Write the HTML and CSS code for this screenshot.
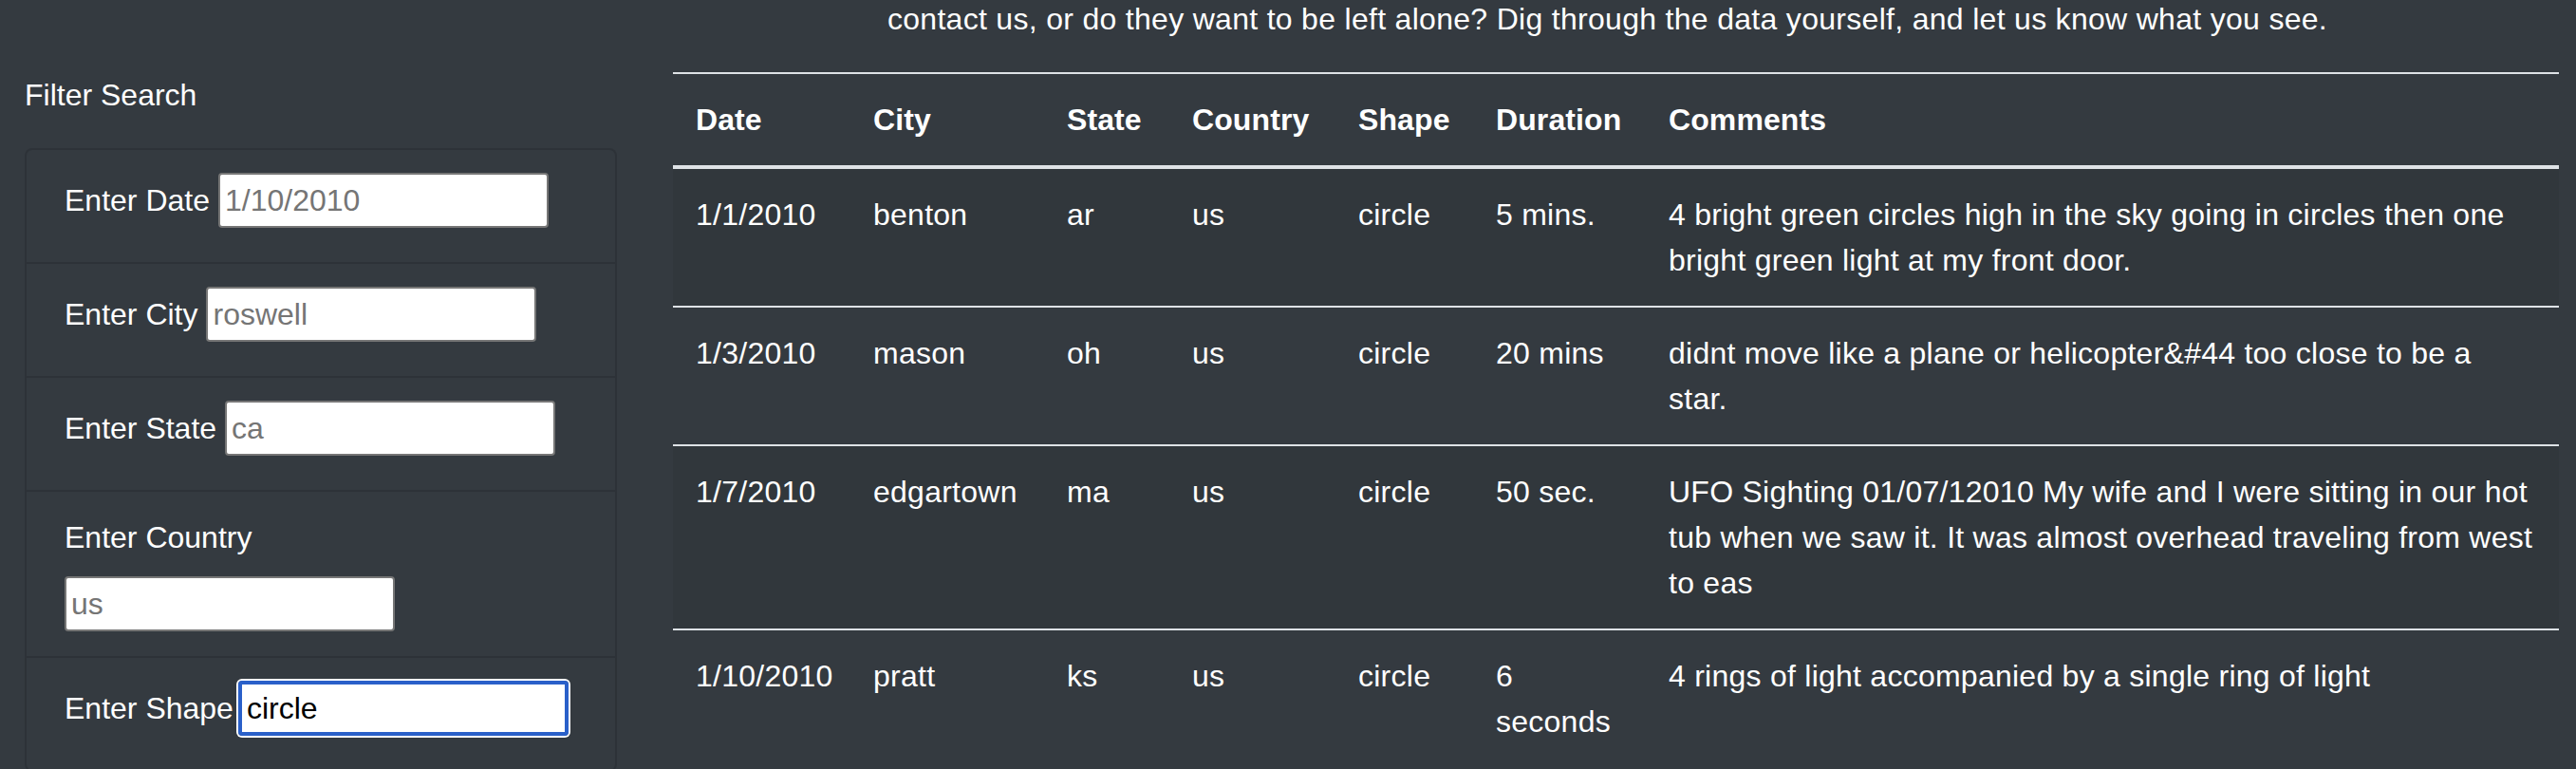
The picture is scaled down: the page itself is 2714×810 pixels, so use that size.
FILE: index.html
```html
<!DOCTYPE html>
<html lang="en">
<head>
<meta charset="utf-8">
<title>UFO Sightings</title>
<link rel="stylesheet" href="styles.css">
</head>
<body>
  <div class="layout">
    <p class="intro">contact us, or do they want to be left alone? Dig through the data yourself, and let us know what you see.</p>

    <form class="filters">
      <p class="filters-title">Filter Search</p>
      <ul class="filter-list">
        <li class="filter-item">
          <div class="field">
            <label for="datetime">Enter Date</label>
            <input type="text" id="datetime" placeholder="1/10/2010">
          </div>
        </li>
        <li class="filter-item">
          <div class="field">
            <label for="city">Enter City</label>
            <input type="text" id="city" placeholder="roswell">
          </div>
        </li>
        <li class="filter-item">
          <div class="field">
            <label for="state">Enter State</label>
            <input type="text" id="state" placeholder="ca">
          </div>
        </li>
        <li class="filter-item">
          <div class="field field-stacked">
            <label for="country">Enter Country</label>
            <input type="text" id="country" placeholder="us">
          </div>
        </li>
        <li class="filter-item">
          <div class="field field-tight">
            <label for="shape">Enter Shape</label>
            <input type="text" id="shape" class="is-focused" value="circle">
          </div>
        </li>
      </ul>
    </form>

    <table class="sightings">
      <colgroup>
        <col class="c-date">
        <col class="c-city">
        <col class="c-state">
        <col class="c-country">
        <col class="c-shape">
        <col class="c-duration">
        <col class="c-comments">
      </colgroup>
      <thead>
        <tr>
          <th>Date</th>
          <th>City</th>
          <th>State</th>
          <th>Country</th>
          <th>Shape</th>
          <th>Duration</th>
          <th>Comments</th>
        </tr>
      </thead>
      <tbody>
        <tr>
          <td>1/1/2010</td>
          <td>benton</td>
          <td>ar</td>
          <td>us</td>
          <td>circle</td>
          <td>5 mins.</td>
          <td>4 bright green circles high in the sky going in circles then one bright green light at my front door.</td>
        </tr>
        <tr>
          <td>1/3/2010</td>
          <td>mason</td>
          <td>oh</td>
          <td>us</td>
          <td>circle</td>
          <td>20 mins</td>
          <td>didnt move like a plane or helicopter&amp;#44 too close to be a star.</td>
        </tr>
        <tr>
          <td>1/7/2010</td>
          <td>edgartown</td>
          <td>ma</td>
          <td>us</td>
          <td>circle</td>
          <td>50 sec.</td>
          <td>UFO Sighting 01/07/12010 My wife and I were sitting in our hot tub when we saw it. It was almost overhead traveling from west to eas</td>
        </tr>
        <tr>
          <td>1/10/2010</td>
          <td>pratt</td>
          <td>ks</td>
          <td>us</td>
          <td>circle</td>
          <td>6 seconds</td>
          <td>4 rings of light accompanied by a single ring of light</td>
        </tr>
      </tbody>
    </table>
  </div>
</body>
</html>
```

FILE: styles.css
```css
html, body {
  margin: 0;
  padding: 0;
}

body {
  background: #343a40;
  color: #fff;
  font-family: "Liberation Sans", Arial, Helvetica, sans-serif;
  font-size: 32px;
  line-height: 48px;
  overflow: hidden;
}

.layout {
  display: grid;
  grid-template-columns: 624px 1987px;
  column-gap: 59px;
  align-items: start;
  padding-left: 26px;
}

.intro {
  grid-column: 2;
  grid-row: 1;
  margin: -4px 18px 32px 0;
  text-align: center;
  white-space: nowrap;
  letter-spacing: 0.3px;
}

.filters {
  grid-column: 1;
  grid-row: 2;
  margin: 0;
}

.filters-title {
  margin: 0 0 32px;
}

.filter-list {
  list-style: none;
  margin: 0;
  padding: 0;
}

.filter-item {
  background: #343a40;
  border: 2px solid rgba(0, 0, 0, 0.125);
  padding: 24px 40px;
}

.filter-item + .filter-item {
  border-top-width: 0;
}

.filter-item:first-child {
  border-top-left-radius: 8px;
  border-top-right-radius: 8px;
}

.filter-item:last-child {
  border-bottom-left-radius: 8px;
  border-bottom-right-radius: 8px;
}

.field {
  display: flex;
  align-items: baseline;
  gap: 9px;
  min-height: 70px;
}

.field-tight {
  gap: 5px;
}

.field label {
  line-height: 48px;
  color: #fff;
}

.field-stacked {
  flex-direction: column;
  align-items: flex-start;
  gap: 17px;
  min-height: 125px;
}

.field input {
  box-sizing: border-box;
  width: 348px;
  height: 58px;
  margin: 0;
  padding: 0 5px;
  font-family: "Liberation Sans", Arial, Helvetica, sans-serif;
  font-size: 32px;
  color: #000;
  background: #fff;
  border: 2px solid #767676;
  border-radius: 4px;
  outline: none;
}

.field input::placeholder {
  color: #757575;
  opacity: 1;
}

.field input.is-focused {
  padding-left: 7px;
  outline: 4px solid #2a60c9;
  outline-offset: -4px;
  box-shadow: 0 0 0 2px #fff;
}

.sightings {
  grid-column: 2;
  grid-row: 2;
  width: 1987px;
  table-layout: fixed;
  border-collapse: collapse;
  color: #fff;
}

.c-date { width: 187px; }
.c-city { width: 204px; }
.c-state { width: 132px; }
.c-country { width: 175px; }
.c-shape { width: 145px; }
.c-duration { width: 182px; }
.c-comments { width: 962px; }

.sightings th,
.sightings td {
  padding: 24px;
  text-align: left;
  vertical-align: top;
  border-top: 2px solid #dee2e6;
}

.sightings td {
  letter-spacing: 0.25px;
}

.sightings th {
  font-weight: bold;
  vertical-align: bottom;
  border-bottom: 4px solid #dee2e6;
  letter-spacing: 0.1px;
}

.sightings th:last-child,
.sightings td:last-child {
  padding-right: 22px;
}

.sightings tbody tr:nth-of-type(odd) {
  background-color: rgba(0, 0, 0, 0.05);
}
```
